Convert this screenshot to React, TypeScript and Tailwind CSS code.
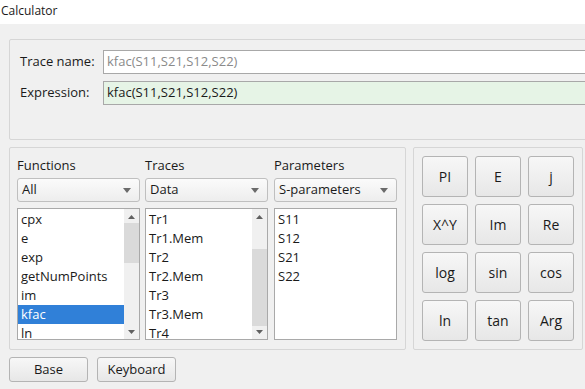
import React from "react"

const font = { fontFamily: '"Open Sans", "Noto Sans", sans-serif' }

function Combo({ value }: { value: string }) {
  return (
    <div className="mt-[3px] flex h-[24px] items-center justify-between rounded-[3px] border border-[#bfbfbf] bg-gradient-to-b from-[#fbfbfb] to-[#ededed] pl-[4px] pr-[8px] text-[13px] text-[#1a1a1a]">
      <span>{value}</span>
      <svg width="8" height="5" viewBox="0 0 8 5">
        <path d="M0 0 L8 0 L4 5 Z" fill="#6b6b6b" />
      </svg>
    </div>
  )
}

function ScrollBar({ thumbTop, thumbHeight }: { thumbTop: number; thumbHeight: number }) {
  return (
    <div className="relative flex w-[15px] flex-col justify-between bg-[#f0f0f0]">
      <div className="flex h-[15px] items-center justify-center">
        <svg width="7" height="4" viewBox="0 0 7 4">
          <path d="M0 4 L7 4 L3.5 0 Z" fill="#606060" />
        </svg>
      </div>
      <div
        className="absolute left-0 right-0 bg-[#dadada]"
        style={{ top: thumbTop, height: thumbHeight }}
      />
      <div className="flex h-[15px] items-center justify-center">
        <svg width="7" height="4" viewBox="0 0 7 4">
          <path d="M0 0 L7 0 L3.5 4 Z" fill="#606060" />
        </svg>
      </div>
    </div>
  )
}

function List({
  items,
  selected,
  scroll,
}: {
  items: string[]
  selected?: string
  scroll?: { top: number; height: number }
}) {
  return (
    <div className="mt-[6px] flex h-[132px] overflow-hidden border border-[#a9a9a9] bg-white">
      <div className="flex-1 overflow-hidden pt-px">
        {items.map((it) => (
          <div
            key={it}
            className={
              "h-[19px] pl-[3px] text-[13px] leading-[19px] " +
              (it === selected ? "bg-[#3080d8] text-white" : "text-[#1a1a1a]")
            }
          >
            {it}
          </div>
        ))}
      </div>
      {scroll && <ScrollBar thumbTop={scroll.top} thumbHeight={scroll.height} />}
    </div>
  )
}

function Column({
  label,
  combo,
  items,
  selected,
  scroll,
  className,
}: {
  label: string
  combo: string
  items: string[]
  selected?: string
  scroll?: { top: number; height: number }
  className?: string
}) {
  return (
    <div className={"flex w-[123px] flex-col " + (className ?? "")}>
      <div className="h-[20px] text-[13px] leading-[20px] text-[#1a1a1a]">{label}</div>
      <Combo value={combo} />
      <List items={items} selected={selected} scroll={scroll} />
    </div>
  )
}

const keys = ["PI", "E", "j", "X^Y", "Im", "Re", "log", "sin", "cos", "ln", "tan", "Arg"]

export default function App() {
  return (
    <div
      className="flex h-[389px] w-[585px] flex-col overflow-hidden bg-[#f0f0f0] text-[#1a1a1a]"
      style={font}
    >
      <div className="h-[24px] shrink-0 bg-white pl-px text-[12px] leading-[22px]">Calculator</div>

      {/* expression group */}
      <div className="ml-[9px] mt-[15px] h-[101px] w-[600px] shrink-0 rounded-[2px] border border-[#d6d6d6] pl-[10px] pt-[10px]">
        <div className="flex h-[24px] items-center">
          <span className="w-[83px] text-[13px]">Trace name:</span>
          <div className="flex h-[24px] flex-1 items-center border border-[#a8a8a8] bg-white pl-[3px] text-[13px] text-[#8a8a8a]">
            kfac(S11,S21,S12,S22)
          </div>
        </div>
        <div className="mt-[7px] flex h-[24px] items-center">
          <span className="w-[83px] text-[13px]">Expression:</span>
          <div className="flex h-[24px] flex-1 items-center border border-[#a8a8a8] bg-[#e6f4e6] pl-[3px] text-[13px]">
            kfac(S11,S21,S12,S22)
          </div>
        </div>
      </div>

      <div className="ml-[9px] mt-[7px] flex shrink-0">
        {/* lists group */}
        <div className="flex h-[203px] w-[397px] rounded-[2px] border border-[#d6d6d6] pl-[7px] pt-[7px]">
          <Column
            label="Functions"
            combo="All"
            items={["cpx", "e", "exp", "getNumPoints", "im", "kfac", "ln"]}
            selected="kfac"
            scroll={{ top: 14, height: 40 }}
          />
          <Column
            label="Traces"
            combo="Data"
            items={["Tr1", "Tr1.Mem", "Tr2", "Tr2.Mem", "Tr3", "Tr3.Mem", "Tr4"]}
            scroll={{ top: 40, height: 77 }}
            className="ml-[5px]"
          />
          <Column
            label="Parameters"
            combo="S-parameters"
            items={["S11", "S12", "S21", "S22"]}
            className="ml-[6px]"
          />
        </div>

        {/* keypad group */}
        <div className="ml-[7px] h-[203px] w-[170px] rounded-[2px] border border-[#d6d6d6] pl-[8px] pt-[8px]">
          <div className="grid grid-cols-[46px_46px_46px] gap-x-[7px] gap-y-[7px]">
            {keys.map((k) => (
              <div
                key={k}
                className="flex h-[41px] items-center justify-center rounded-[3px] border border-[#b4b4b4] bg-gradient-to-b from-[#f7f7f7] to-[#e7e7e7] text-[14px]"
              >
                {k}
              </div>
            ))}
          </div>
        </div>
      </div>

      <div className="ml-[9px] mt-[7px] flex gap-[9px]">
        <div className="flex h-[25px] w-[79px] items-center justify-center rounded-[3px] border border-[#b4b4b4] bg-gradient-to-b from-[#f7f7f7] to-[#e7e7e7] text-[13px]">
          Base
        </div>
        <div className="flex h-[25px] w-[79px] items-center justify-center rounded-[3px] border border-[#b4b4b4] bg-gradient-to-b from-[#f7f7f7] to-[#e7e7e7] text-[13px]">
          Keyboard
        </div>
      </div>
    </div>
  )
}
